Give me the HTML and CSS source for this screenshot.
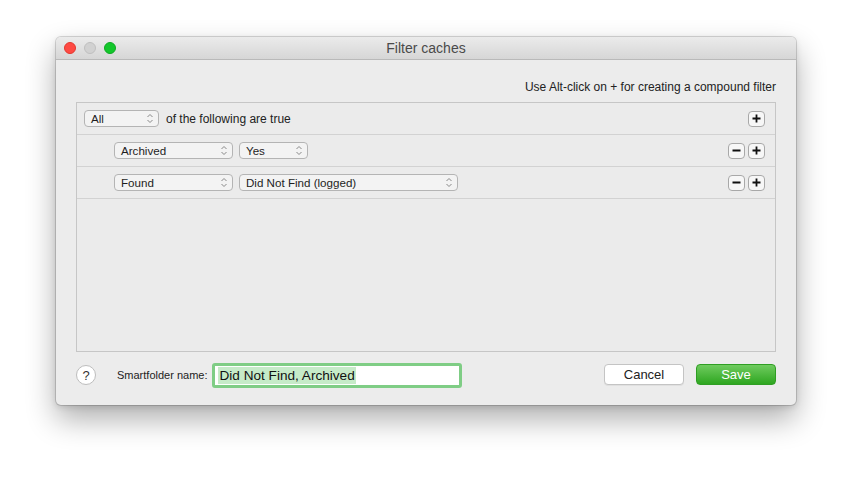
FILE: index.html
```html
<!DOCTYPE html>
<html>
<head>
<meta charset="utf-8">
<link rel="stylesheet" href="styles.css">
</head>
<body>
<div class="window">
  <div class="titlebar">
    <div class="lights">
      <span class="light red"></span>
      <span class="light gray"></span>
      <span class="light green"></span>
    </div>
    <div class="title">Filter caches</div>
  </div>
  <div class="content">
    <div class="hint">Use Alt-click on + for creating a compound filter</div>
    <div class="panel">
      <div class="row">
        <div class="popup w-all"><span>All</span><svg class="chev" viewBox="0 0 8 11"><path d="M1.5 4 L4 1.5 L6.5 4 M1.5 7 L4 9.5 L6.5 7" fill="none" stroke="#888" stroke-width="1"/></svg></div>
        <span class="rowtext">of the following are true</span>
        <div class="btns"><span class="sq"><svg viewBox="0 0 9 9"><path d="M4.5 0.5 V8.5 M0.5 4.5 H8.5" stroke="#111" stroke-width="1.8"/></svg></span></div>
      </div>
      <div class="row indent">
        <div class="popup w-crit"><span>Archived</span><svg class="chev" viewBox="0 0 8 11"><path d="M1.5 4 L4 1.5 L6.5 4 M1.5 7 L4 9.5 L6.5 7" fill="none" stroke="#888" stroke-width="1"/></svg></div>
        <div class="popup w-yes"><span>Yes</span><svg class="chev" viewBox="0 0 8 11"><path d="M1.5 4 L4 1.5 L6.5 4 M1.5 7 L4 9.5 L6.5 7" fill="none" stroke="#888" stroke-width="1"/></svg></div>
        <div class="btns"><span class="sq"><svg viewBox="0 0 9 9"><path d="M0.5 4.5 H8.5" stroke="#111" stroke-width="1.8"/></svg></span><span class="sq"><svg viewBox="0 0 9 9"><path d="M4.5 0.5 V8.5 M0.5 4.5 H8.5" stroke="#111" stroke-width="1.8"/></svg></span></div>
      </div>
      <div class="row indent">
        <div class="popup w-crit"><span>Found</span><svg class="chev" viewBox="0 0 8 11"><path d="M1.5 4 L4 1.5 L6.5 4 M1.5 7 L4 9.5 L6.5 7" fill="none" stroke="#888" stroke-width="1"/></svg></div>
        <div class="popup w-long"><span>Did Not Find (logged)</span><svg class="chev" viewBox="0 0 8 11"><path d="M1.5 4 L4 1.5 L6.5 4 M1.5 7 L4 9.5 L6.5 7" fill="none" stroke="#888" stroke-width="1"/></svg></div>
        <div class="btns"><span class="sq"><svg viewBox="0 0 9 9"><path d="M0.5 4.5 H8.5" stroke="#111" stroke-width="1.8"/></svg></span><span class="sq"><svg viewBox="0 0 9 9"><path d="M4.5 0.5 V8.5 M0.5 4.5 H8.5" stroke="#111" stroke-width="1.8"/></svg></span></div>
      </div>
    </div>
    <div class="footer">
      <span class="help">?</span>
      <span class="label">Smartfolder name:</span>
      <div class="field"><span class="sel">Did Not Find, Archived</span></div>
      <div class="spacer"></div>
      <button class="btn cancel">Cancel</button>
      <button class="btn save">Save</button>
    </div>
  </div>
</div>
</body>
</html>
```

FILE: styles.css
```css
html, body {
  margin: 0;
  padding: 0;
  background: #ffffff;
  width: 852px;
  height: 480px;
  overflow: hidden;
}
body {
  padding: 37px 0 0 56px;
  box-sizing: border-box;
  font-family: "Liberation Sans", Arial, sans-serif;
}
.window {
  width: 740px;
  height: 368px;
  border-radius: 5px;
  background: #ececec;
  box-shadow: 0 0 0 1px rgba(0,0,0,0.14), 0 14px 30px rgba(0,0,0,0.32), 0 2px 6px rgba(0,0,0,0.12);
  overflow: hidden;
  display: flex;
  flex-direction: column;
}
.titlebar {
  height: 22px;
  background: linear-gradient(#ebebeb, #d6d6d6);
  border-bottom: 1px solid #b9b9b9;
  position: relative;
  display: flex;
  align-items: center;
  justify-content: center;
  flex-shrink: 0;
}
.lights {
  position: absolute;
  left: 8px;
  top: 5px;
  display: flex;
  gap: 8px;
}
.light {
  width: 12px;
  height: 12px;
  border-radius: 50%;
  box-sizing: border-box;
}
.light.red { background: #fe4a43; border: 1px solid #e2382f; }
.light.gray { background: #d1d1d1; border: 1px solid #bfbfbf; }
.light.green { background: #13c72b; border: 1px solid #0ea923; }
.title {
  font-size: 14px;
  color: #4a4a4a;
}
.content {
  flex: 1;
  padding: 0 20px;
  display: flex;
  flex-direction: column;
}
.hint {
  text-align: right;
  font-size: 12px;
  color: #222;
  margin-top: 20px;
  height: 14px;
  line-height: 14px;
}
.panel {
  margin-top: 8px;
  height: 250px;
  box-sizing: border-box;
  border: 1px solid #c6c6c6;
  background: #ebebeb;
}
.row {
  height: 32px;
  box-sizing: border-box;
  border-bottom: 1px solid #d2d2d2;
  display: flex;
  align-items: center;
  padding: 0 10px 0 7px;
  gap: 7px;
}
.row.indent { padding-left: 37px; gap: 6px; }
.popup {
  height: 17px;
  box-sizing: border-box;
  border: 1px solid #b4b4b4;
  border-radius: 4px;
  background: #f3f3f3;
  display: flex;
  align-items: center;
  justify-content: space-between;
  padding: 0 4px 0 6px;
  font-size: 11.6px;
  color: #1e1e1e;
}
.chev { width: 8px; height: 11px; }
.w-all { width: 75px; }
.w-crit { width: 119px; }
.w-yes { width: 69px; }
.w-long { width: 219px; }
.rowtext {
  font-size: 12px;
  color: #222;
}
.btns {
  margin-left: auto;
  display: flex;
  gap: 3px;
}
.sq {
  width: 17px;
  height: 16px;
  box-sizing: border-box;
  border: 1px solid #a8a8a8;
  border-radius: 4px;
  background: #f7f7f7;
  display: flex;
  align-items: center;
  justify-content: center;
}
.sq svg { width: 9px; height: 9px; }
.footer {
  height: 46px;
  display: flex;
  align-items: center;
}
.help {
  width: 20px;
  height: 20px;
  box-sizing: border-box;
  border: 1px solid #bdbdbd;
  border-radius: 50%;
  background: #fff;
  display: flex;
  align-items: center;
  justify-content: center;
  font-size: 13px;
  color: #333;
}
.label {
  font-size: 11px;
  color: #222;
  margin-left: 21px;
}
.field {
  margin-left: 5px;
  width: 250px;
  height: 25px;
  box-sizing: border-box;
  border: 3px solid #7fcd85;
  border-radius: 3px;
  background: #fff;
  display: flex;
  align-items: center;
  padding-left: 3px;
}
.sel {
  background: #c6ebc8;
  font-size: 13.6px;
  color: #111;
  line-height: 17px;
  padding: 0 1px;
}
.spacer { flex: 1; }
.btn {
  font-family: "Liberation Sans", Arial, sans-serif;
  height: 21px;
  width: 80px;
  box-sizing: border-box;
  border-radius: 4px;
  font-size: 13px;
  padding: 0;
  margin-top: -1px;
}
.cancel {
  background: #fff;
  border: 1px solid #c4c4c4;
  color: #222;
  box-shadow: 0 1px 0 rgba(0,0,0,0.05);
}
.save {
  margin-left: 12px;
  background: linear-gradient(#6fcb5f, #2ea620);
  border: 1px solid #2f9e23;
  color: #fff;
}
```
